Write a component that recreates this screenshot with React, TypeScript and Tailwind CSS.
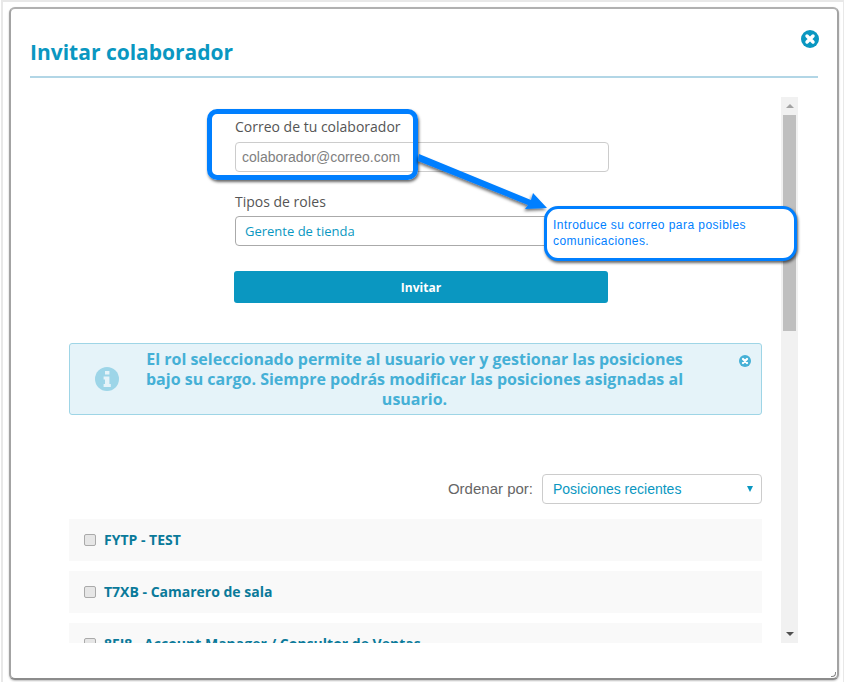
const rows = ['FYTP - TEST', 'T7XB - Camarero de sala', '8FI8 - Account Manager / Consultor de Ventas']

function CloseIcon({ size, color }: { size: number; color: string }) {
  return (
    <svg width={size} height={size} viewBox="0 0 24 24">
      <circle cx="12" cy="12" r="12" fill={color} />
      <path d="M8 8l8 8M16 8l-8 8" stroke="#fff" strokeWidth="4.6" strokeLinecap="round" />
    </svg>
  )
}

function InfoIcon() {
  return (
    <svg width="24" height="24" viewBox="0 0 24 24">
      <circle cx="12" cy="12" r="12" fill="#9dd5e8" />
      <path d="M10 4h4.4v3.4H10zM8.6 9.6h5.8v7.4h1.4v3H8.6v-3h1.4v-4.4H8.6z" fill="#e5f3f9" />
    </svg>
  )
}

export default function App() {
  return (
    <div className="relative h-[682px] w-[846px] overflow-hidden bg-white font-['Open_Sans',sans-serif]">
      <div className="ml-[1px] h-[682px] w-[843px] border-t-2 border-r border-l-2 border-[#e8e8e8] pt-[5px] pl-[6px]">
        {/* modal */}
        <div className="relative h-[673px] w-[830px] rounded-[6px] border-2 border-[#a3a3a3] border-t-[#b0b0b0] border-b-[#8c8c8c] bg-white pt-[28px] shadow-[0_1px_2px_rgba(0,0,0,0.25)]">
          <div className="absolute top-[21px] right-[18px]">
            <CloseIcon size={18} color="#0a97c1" />
          </div>

          <div className="mx-[19px] h-[41px] border-b-2 border-[#b2d6e6]">
            <h1 className="text-[21px] leading-[30px] font-bold text-[#0a97c1]">Invitar colaborador</h1>
          </div>

          <div className="mt-[19px] ml-[19px] flex h-[546px] w-[768px]">
            <div className="w-[751px] overflow-hidden">
              <div className="ml-[205px] w-[374px] pt-[21px]">
                <label className="block text-[14px] leading-[18px] text-[#555]">Correo de tu colaborador</label>
                <div className="mt-[6px] flex h-[30px] items-center rounded-[4px] border border-[#ccc] px-[6px] font-['Liberation_Sans',sans-serif] text-[14px] text-[#808080]">
                  colaborador@correo.com
                </div>
                <label className="mt-[21px] block text-[14px] leading-[18px] text-[#555]">Tipos de roles</label>
                <div className="mt-[5px] flex h-[30px] items-center rounded-[4px] border border-[#aaa] px-[9px] pt-[2px] text-[13px] text-[#0a97c1]">
                  Gerente de tienda
                </div>
                <button className="mt-[25px] -ml-px flex h-[32px] w-[374px] items-center justify-center rounded-[3px] bg-[#0a97c1] pt-[1px] text-[12px] font-bold text-white">
                  Invitar
                </button>
              </div>

              <div className="relative mt-[40px] ml-[39px] flex h-[72px] w-[693px] items-center rounded-[3px] border border-[#9ed5e6] bg-[#e5f3f9]">
                <div className="ml-[25px]">
                  <InfoIcon />
                </div>
                <p className="ml-[13px] w-[565px] text-center text-[16px] leading-[20px] font-bold text-[#45b0d6]">
                  El rol seleccionado permite al usuario ver y gestionar las posiciones bajo su cargo. Siempre podrás modificar las posiciones asignadas al usuario.
                </p>
                <div className="absolute top-[11px] right-[10px]">
                  <CloseIcon size={12} color="#45b0d6" />
                </div>
              </div>

              <div className="mt-[59px] ml-[39px] flex w-[693px] items-center justify-end gap-[9px]">
                <span className="pt-[1px] font-['Liberation_Sans',sans-serif] text-[15px] text-[#666]">Ordenar por:</span>
                <div className="relative flex h-[30px] w-[220px] items-center rounded-[4px] border border-[#ccc] px-[10px] font-['Liberation_Sans',sans-serif] text-[14px] text-[#0a97c1]">
                  Posiciones recientes
                  <span className="absolute top-[11px] right-[8px] h-0 w-0 border-x-[3px] border-t-[6px] border-x-transparent border-t-[#0a97c1]" />
                </div>
              </div>

              <div className="mt-[15px] ml-[39px] flex w-[693px] flex-col gap-[10px]">
                {rows.map((row) => (
                  <div key={row} className="flex h-[42px] shrink-0 items-center gap-[8px] bg-[#f9f9f9] pl-[15px]">
                    <span className="h-[12px] w-[12px] rounded-[2px] border border-[#aaa] bg-[#e6e6e6]" />
                    <span className="pb-[2px] text-[14px] font-bold text-[#0a7a9a]">{row}</span>
                  </div>
                ))}
              </div>
            </div>

            {/* scrollbar */}
            <div className="flex h-[546px] w-[17px] flex-col items-center bg-[#f1f1f1]">
              <div className="flex h-[18px] items-center">
                <span className="h-0 w-0 border-x-[4px] border-b-[4px] border-x-transparent border-b-[#a3a3a3]" />
              </div>
              <div className="h-[216px] w-[13px] bg-[#bfbfbf]" />
              <div className="mt-auto flex h-[18px] items-center">
                <span className="h-0 w-0 border-x-[4px] border-t-[4px] border-x-transparent border-t-[#505050]" />
              </div>
            </div>
          </div>

          <span className="absolute right-[1px] bottom-[1px] h-[5px] w-[5px] rounded-br-[4px] border-r border-b border-[#888]" />
        </div>
      </div>

      {/* annotation overlay */}
      <div className="absolute top-[109px] left-[207px] h-[71px] w-[211px] rounded-[10px] border-[5px] border-[#007fff] shadow-[1px_2px_3px_rgba(0,0,0,0.6)]" />
      <svg className="absolute top-0 left-0" width="846" height="682">
        <defs>
          <filter id="arrowShadow" x="-20%" y="-20%" width="140%" height="140%">
            <feDropShadow dx="-1" dy="2" stdDeviation="1.5" floodColor="#000" floodOpacity="0.55" />
          </filter>
        </defs>
        <path d="M419 154L531 200L533 193L547 208L525 209L528 205L418 161Z" fill="#007fff" filter="url(#arrowShadow)" />
      </svg>
      <div className="absolute top-[206px] left-[544px] h-[55px] w-[253px] rounded-[14px] border-[3px] border-[#007fff] bg-white px-[6px] pt-[8px] font-['Liberation_Sans',sans-serif] text-[12px] leading-[16px] tracking-[0.45px] text-[#007fff] shadow-[1px_2px_3px_rgba(0,0,0,0.6)]">
        Introduce su correo para posibles comunicaciones.
      </div>
    </div>
  )
}
